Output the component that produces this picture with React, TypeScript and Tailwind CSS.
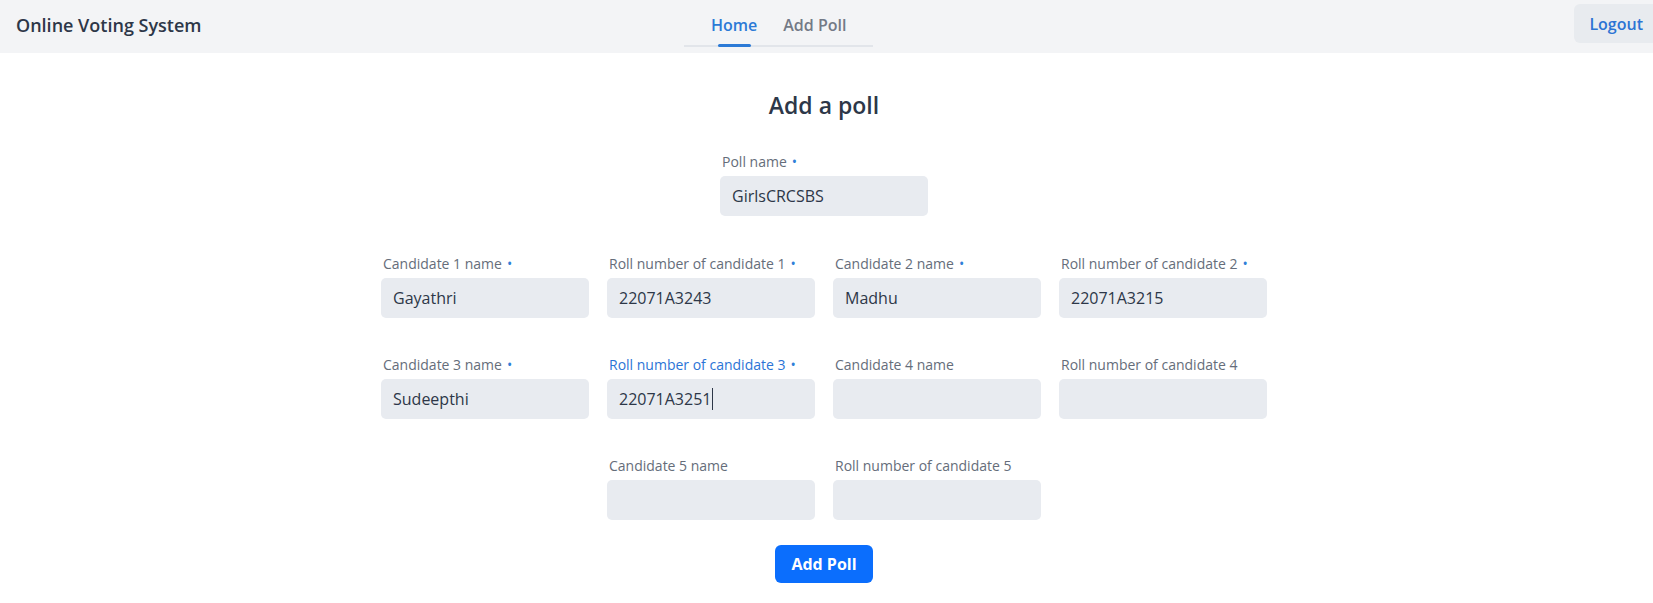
import React from "react";

type Field = { label: string; value?: string; required?: boolean; focused?: boolean };

const fields: Field[] = [
  { label: "Candidate 1 name", value: "Gayathri", required: true },
  { label: "Roll number of candidate 1", value: "22071A3243", required: true },
  { label: "Candidate 2 name", value: "Madhu", required: true },
  { label: "Roll number of candidate 2", value: "22071A3215", required: true },
  { label: "Candidate 3 name", value: "Sudeepthi", required: true },
  { label: "Roll number of candidate 3", value: "22071A3251", required: true, focused: true },
  { label: "Candidate 4 name" },
  { label: "Roll number of candidate 4" },
  { label: "Candidate 5 name" },
  { label: "Roll number of candidate 5" },
];

function FormField({ f }: { f: Field }) {
  return (
    <div className="flex w-[208px] flex-col">
      <div
        className={
          "mb-[4px] h-[20px] pl-[2px] text-[14px] leading-[20px] " +
          (f.focused ? "text-[#2b74d6]" : "text-[#656d7a]")
        }
      >
        {f.label}
        {f.required && <span className="ml-[5px] text-[#2f7fd8]">•</span>}
      </div>
      <div className="flex h-[40px] items-center rounded-[5px] bg-[#e8ebf0] pl-[12px] text-[16px] font-medium text-[#2d3748]">
        {f.value}
        {f.focused && <span className="ml-[1px] inline-block h-[22px] w-[1px] bg-[#2d3748]" />}
      </div>
    </div>
  );
}

export default function App() {
  return (
    <div className="min-h-screen bg-white" style={{ fontFamily: '"Open Sans", "Noto Sans", sans-serif' }}>
      <nav className="flex h-[53px] items-start overflow-hidden bg-[#f3f4f6]">
        <div className="flex h-[50px] w-[684px] items-center pl-[16px] text-[18px] font-semibold text-[#2d3748]">
          Online Voting System
        </div>
        <div className="relative flex h-[47px] items-center gap-[26px] border-b-2 border-[#e2e5ea] px-[27px] pt-[5px] text-[16px] font-semibold">
          <span className="text-[#2c7ad6]">Home</span>
          <span className="text-[#737a86]">Add Poll</span>
          <span className="absolute bottom-[-2px] left-[34px] h-[3px] w-[33px] rounded-full bg-[#2c7ad6]" />
        </div>
        <div className="ml-auto mr-[-5px] mt-[4px] flex h-[39px] items-center rounded-[6px] bg-[#e8ebef] px-[15px] text-[16px] font-semibold text-[#2c74d4]">
          Logout
        </div>
      </nav>

      <main className="flex flex-col items-center pr-[5px]">
        <h1 className="mt-[36px] h-[32px] text-[23px] font-semibold leading-[32px] text-[#2d3748]">Add a poll</h1>
        <div className="mt-[31px]">
          <FormField f={{ label: "Poll name", value: "GirlsCRCSBS", required: true }} />
        </div>
        <div className="mt-[38px] flex w-[886px] flex-wrap justify-center gap-x-[18px] gap-y-[37px]">
          {fields.map((f) => (
            <FormField key={f.label} f={f} />
          ))}
        </div>
        <button className="mt-[25px] flex h-[38px] w-[98px] items-center justify-center rounded-[6px] bg-[#0b6efd] text-[16px] font-bold text-white">
          Add Poll
        </button>
      </main>
    </div>
  );
}
